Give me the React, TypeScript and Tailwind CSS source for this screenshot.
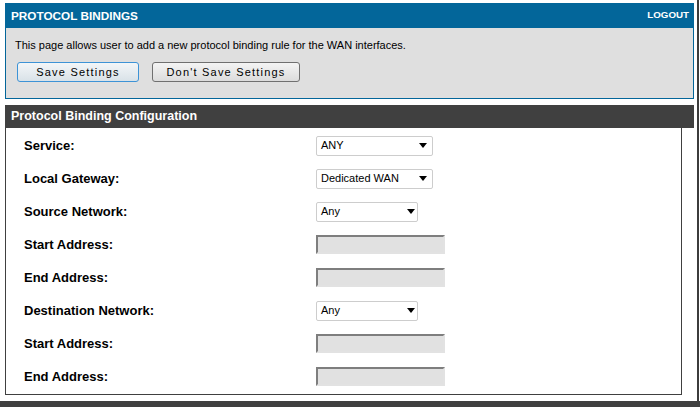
const font = { fontFamily: '"Liberation Sans", Arial, sans-serif' };

type Row = { label: string; kind: "select" | "input"; value?: string; wide?: boolean };

const rows: Row[] = [
  { label: "Service:", kind: "select", value: "ANY", wide: true },
  { label: "Local Gateway:", kind: "select", value: "Dedicated WAN", wide: true },
  { label: "Source Network:", kind: "select", value: "Any" },
  { label: "Start Address:", kind: "input" },
  { label: "End Address:", kind: "input" },
  { label: "Destination Network:", kind: "select", value: "Any" },
  { label: "Start Address:", kind: "input" },
  { label: "End Address:", kind: "input" },
];

function FakeSelect({ value, wide }: { value: string; wide?: boolean }) {
  return (
    <div
      className={`flex h-[20px] items-center justify-between rounded-[2px] border border-[#cdcdcd] bg-white pl-[4px] text-[11px] text-black ${
        wide ? "w-[117px] pr-[5px]" : "w-[102px] pr-[2px]"
      }`}
    >
      <span>{value}</span>
      <svg width="8" height="5" viewBox="0 0 8 5">
        <path d="M0 0h8L4 5z" fill="#000" />
      </svg>
    </div>
  );
}

function Field() {
  return (
    <div className="h-[19px] w-[129px] border-2 border-t-[#7e7e7e] border-l-[#7e7e7e] border-r-[#e2e2e2] border-b-[#e2e2e2] bg-[#e1e1e1]" />
  );
}

export default function App() {
  return (
    <div className="flex h-[407px] w-[700px] flex-col bg-white" style={font}>
      <div className="flex flex-1">
        <div className="ml-[5px] flex w-[689px] flex-col pt-[3px]">
          {/* title bar */}
          <div className="flex h-[25px] items-center justify-between bg-[#03669a] pl-[6px] pr-[5px] font-bold text-white">
            <span className="text-[11.75px]">PROTOCOL BINDINGS</span>
            <span className="text-[9.75px]">LOGOUT</span>
          </div>

          {/* intro panel */}
          <div className="h-[71px] border-x border-b border-[#03669a] bg-[#dfdfdf] pl-[9px] pt-[10px]">
            <p className="text-[11px] leading-[14px] text-black">
              This page allows user to add a new protocol binding rule for the WAN interfaces.
            </p>
            <div className="ml-[2px] mt-[10px] flex gap-[13px]">
              <button className="h-[20px] w-[122px] rounded-[3px] border border-[#3d93d6] bg-gradient-to-b from-[#f3f6f8] to-[#d9e2e8] text-[11px] tracking-[1.2px] text-black">
                Save Settings
              </button>
              <button className="h-[20px] w-[148px] rounded-[3px] border border-[#707070] bg-gradient-to-b from-[#f4f4f4] to-[#dcdcdc] text-[11px] tracking-[1.2px] text-black">
                Don't Save Settings
              </button>
            </div>
          </div>

          {/* config section */}
          <div className="mt-[6px] flex h-[23px] items-center bg-[#404040] pl-[6px] text-[12.5px] font-bold text-white">
            Protocol Binding Configuration
          </div>
          <div className="w-[677px] border-x border-b border-[#404040] pb-[1px] pl-[18px] pt-[1px]">
            {rows.map((r, i) => (
              <div key={i} className="grid h-[33px] grid-cols-[292px_1fr] items-center">
                <span className="text-[13px] font-bold text-black">{r.label}</span>
                <div>
                  {r.kind === "select" ? <FakeSelect value={r.value!} wide={r.wide} /> : <Field />}
                </div>
              </div>
            ))}
          </div>
        </div>
        <div className="ml-[3px] w-[2px] bg-[#3c3c3c]" />
      </div>
      <div className="h-[6px] bg-[#404040]" />
    </div>
  );
}
